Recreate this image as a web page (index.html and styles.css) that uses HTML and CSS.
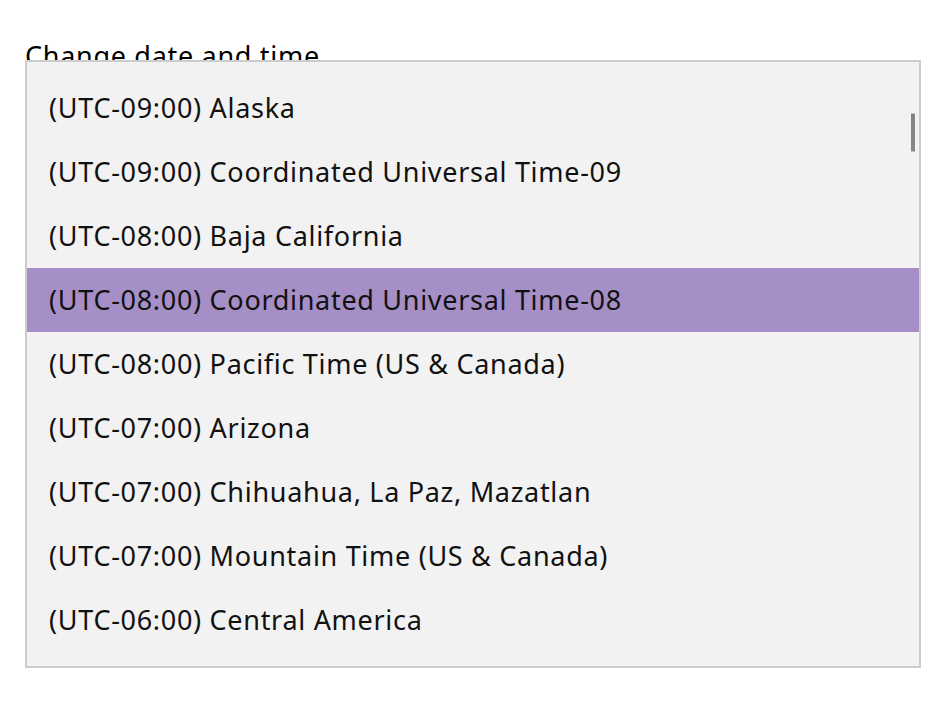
FILE: index.html
```html
<!DOCTYPE html>
<html>
<head>
<meta charset="utf-8">
<link rel="stylesheet" href="styles.css">
</head>
<body>
<div class="page">
  <h1 class="title">Change date and time</h1>
  <div class="dropdown">
    <ul class="list">
      <li class="item">(UTC-09:00) Alaska</li>
      <li class="item">(UTC-09:00) Coordinated Universal Time-09</li>
      <li class="item">(UTC-08:00) Baja California</li>
      <li class="item selected">(UTC-08:00) Coordinated Universal Time-08</li>
      <li class="item">(UTC-08:00) Pacific Time (US &amp; Canada)</li>
      <li class="item">(UTC-07:00) Arizona</li>
      <li class="item">(UTC-07:00) Chihuahua, La Paz, Mazatlan</li>
      <li class="item">(UTC-07:00) Mountain Time (US &amp; Canada)</li>
      <li class="item">(UTC-06:00) Central America</li>
    </ul>
    <div class="scrollbar"></div>
  </div>
</div>
</body>
</html>
```

FILE: styles.css
```css
html, body {
  margin: 0;
  padding: 0;
  background: #ffffff;
}
body {
  font-family: "Noto Sans", "Open Sans", sans-serif;
  color: #000;
  width: 946px;
  height: 706px;
  overflow: hidden;
}
.page {
  position: relative;
  width: 946px;
  height: 706px;
}
.title {
  margin: 0;
  padding: 38px 0 0 25px;
  font-size: 27px;
  font-weight: 400;
  line-height: 36px;
  letter-spacing: 0.7px;
}
.dropdown {
  position: absolute;
  left: 25px;
  top: 60px;
  width: 892px;
  height: 604px;
  border: 2px solid #cccccc;
  background: #f2f2f2;
}
.list {
  list-style: none;
  margin: 0;
  padding: 14px 0;
}
.item {
  height: 64px;
  line-height: 63px;
  padding-left: 22px;
  font-size: 27px;
  letter-spacing: 0.7px;
  color: #111;
  white-space: nowrap;
}
.selected {
  background: #a68fc7;
}
.scrollbar {
  position: absolute;
  right: 4px;
  top: 51px;
  width: 4px;
  height: 37px;
  background: #858585;
  border-top: 1px solid #bdbdbd;
  border-bottom: 1px solid #bdbdbd;
}
```
